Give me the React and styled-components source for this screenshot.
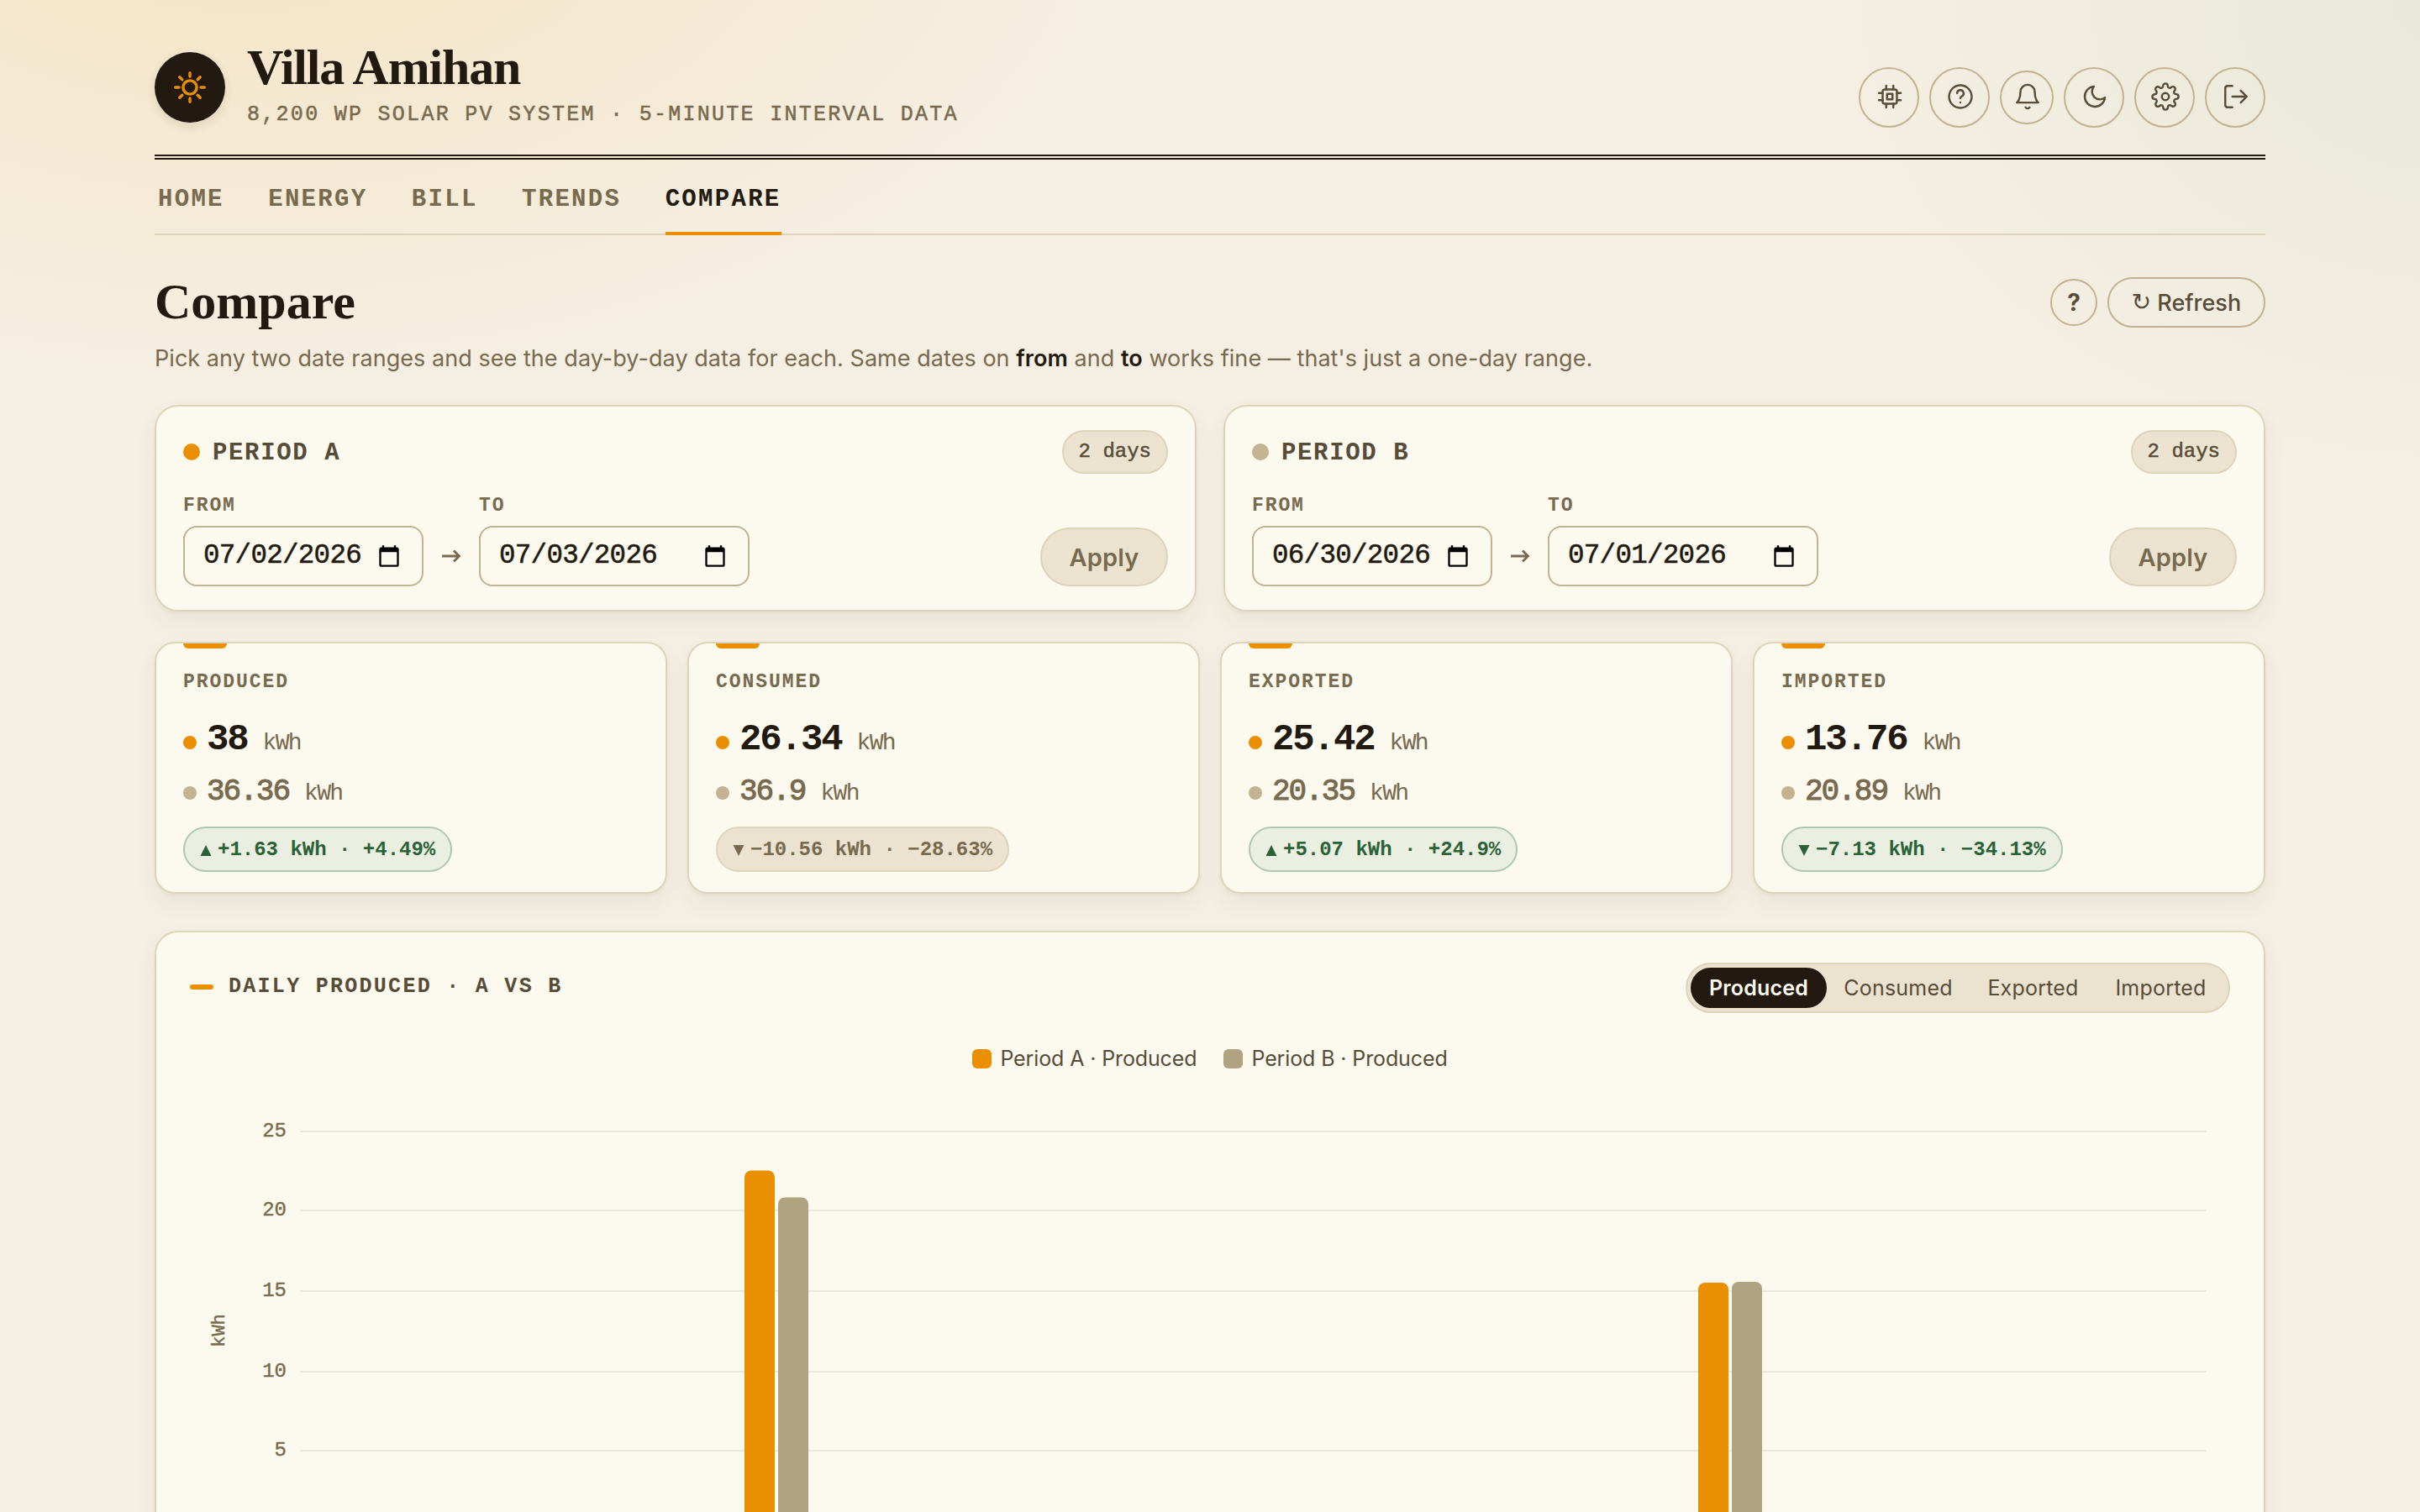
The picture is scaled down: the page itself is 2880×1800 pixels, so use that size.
import React from 'react';
import styled, { createGlobalStyle } from 'styled-components';

const c = {
  ink: '#221a10',
  body: '#574c38',
  mute: '#776a4e',
  line: '#ddd4ba',
  rule: '#c2b390',
  card: '#fcf9ef',
  chip: '#ebe3d0',
  amber: '#e98f00',
  sand: '#c2b392',
  barB: '#b1a282',
  green: '#2a6237',
};
const mono = `'Liberation Mono', 'DejaVu Sans Mono', monospace`;
const sans = `Inter, 'Liberation Sans', sans-serif`;
const serif = `'Liberation Serif', serif`;

const GlobalStyle = createGlobalStyle`
  *, *::before, *::after { box-sizing: border-box; }
  html, body { margin: 0; padding: 0; overflow: hidden; background: #f5efe3; }
`;

const Page = styled.div`
  height: 1800px;
  overflow: hidden;
  padding: 0 184px;
  font-family: ${sans};
  color: ${c.ink};
  background:
    radial-gradient(1600px 900px at 10% -8%, rgba(240, 178, 50, 0.19), rgba(240, 178, 50, 0) 68%),
    radial-gradient(1200px 900px at 102% 0%, rgba(80, 150, 90, 0.08), rgba(80, 150, 90, 0) 65%),
    #f5efe3;
`;

const Header = styled.header`
  display: flex;
  justify-content: space-between;
  height: 190px;
  padding: 48px 0 24px;
  border-bottom: 6px double ${c.ink};
`;
const Brand = styled.div`
  display: flex;
  align-items: center;
  gap: 26px;
`;
const Logo = styled.div`
  width: 84px;
  height: 84px;
  border-radius: 50%;
  background: ${c.ink};
  display: grid;
  place-items: center;
  box-shadow: 0 4px 12px rgba(60, 45, 15, 0.12);
`;
const BrandText = styled.div`
  display: flex;
  flex-direction: column;
  gap: 11px;
  padding-bottom: 5px;
`;
const BrandName = styled.h1`
  margin: 0;
  font: 700 60px/60px ${serif};
  letter-spacing: -1.2px;
`;
const Tagline = styled.div`
  font: 400 25px/32px ${mono};
  letter-spacing: 2.28px;
  color: ${c.mute};
  -webkit-text-stroke: 0.5px ${c.mute};
  text-transform: uppercase;
`;
const Actions = styled.div`
  display: flex;
  align-items: center;
  align-self: flex-end;
  gap: 12px;
  margin-bottom: 8px;
`;
const IconButton = styled.button`
  width: ${(p) => p.$size || 72}px;
  height: ${(p) => p.$size || 72}px;
  padding: 0;
  border: 2px solid ${c.rule};
  border-radius: 50%;
  background: transparent;
  color: ${c.body};
  display: grid;
  place-items: center;
  svg { transform: translate(1px, -1px); }
`;

const Nav = styled.nav`
  display: flex;
  gap: 52.4px;
  padding-left: 4px;
  border-bottom: 2px solid ${c.line};
`;
const NavLink = styled.a`
  padding: 30px 0 20px;
  margin-bottom: -2px;
  border-bottom: 4px solid ${(p) => (p.$active ? c.amber : 'transparent')};
  font: 700 29px/36px ${mono};
  letter-spacing: 2.3px;
  color: ${(p) => (p.$active ? c.ink : c.mute)};
`;

const TitleRow = styled.div`
  display: flex;
  justify-content: space-between;
  align-items: center;
  height: 60px;
  margin-top: 50px;
`;
const Title = styled.h2`
  margin: 0;
  padding-bottom: 3px;
  font: 700 60px/60px ${serif};
`;
const TitleActions = styled.div`
  display: flex;
  align-items: center;
  gap: 12px;
`;
const HelpButton = styled.button`
  width: 56px;
  height: 56px;
  padding: 0;
  border: 2px solid ${c.rule};
  border-radius: 50%;
  background: transparent;
  color: ${c.body};
  font: 700 28px/1 ${sans};
`;
const RefreshButton = styled.button`
  display: flex;
  align-items: center;
  justify-content: center;
  gap: 7px;
  width: 188px;
  height: 60px;
  padding: 0;
  border: 2px solid ${c.rule};
  border-radius: 30px;
  background: transparent;
  color: ${c.body};
  font: 500 27px/1 ${sans};
  span { font: 400 28px/1 'DejaVu Sans', sans-serif; }
`;
const Intro = styled.p`
  margin: 17px 0 35px;
  font: 400 27px/40px ${sans};
  letter-spacing: 0.05px;
  white-space: nowrap;
  color: ${c.mute};
  b { font-weight: 600; color: ${c.ink}; }
`;

const Periods = styled.section`
  display: grid;
  grid-template-columns: 1fr 1fr;
  gap: 32px;
`;
const Card = styled.div`
  background: ${c.card};
  border: 2px solid ${c.line};
  border-radius: 28px;
  box-shadow: 0 2px 4px rgba(60, 45, 15, 0.04), 0 12px 28px rgba(60, 50, 15, 0.055);
`;
const PeriodCard = styled(Card)`
  height: 246px;
  padding: 28px 32px;
`;
const PeriodHead = styled.div`
  display: flex;
  align-items: center;
  height: 52px;
`;
const Dot = styled.span`
  flex: none;
  width: ${(p) => p.$size}px;
  height: ${(p) => p.$size}px;
  border-radius: 50%;
  background: ${(p) => p.$color};
`;
const PeriodName = styled.span`
  margin-left: 15px;
  padding-top: 4px;
  font: 700 29px/36px ${mono};
  letter-spacing: 1.65px;
  color: ${c.body};
`;
const Days = styled.span`
  margin-left: auto;
  height: 52px;
  padding: 0 18px;
  border: 2px solid ${c.line};
  border-radius: 26px;
  background: ${c.chip};
  font: 400 24px/47px ${mono};
  color: ${c.body};
  -webkit-text-stroke: 0.5px ${c.body};
`;
const PeriodForm = styled.div`
  display: flex;
  align-items: flex-end;
  margin-top: 24px;
`;
const Field = styled.label`
  display: flex;
  flex-direction: column;
  gap: 10px;
  width: ${(p) => p.$width}px;
`;
const FieldLabel = styled.span`
  font: 700 23px/28px ${mono};
  letter-spacing: 1.9px;
  color: ${c.mute};
`;
const DateBox = styled.span`
  display: flex;
  align-items: center;
  justify-content: space-between;
  height: 72px;
  padding: 0 25px 0 22px;
  border: 2px solid ${c.rule};
  border-radius: 16px;
  font: 400 32.5px/70px ${mono};
  letter-spacing: -0.7px;
  color: ${c.ink};
  -webkit-text-stroke: 0.5px ${c.ink};
`;
const Arrow = styled.span`
  width: 66px;
  height: 72px;
  display: grid;
  place-items: center;
  color: ${c.mute};
`;
const Apply = styled.button`
  margin-left: auto;
  width: 152px;
  height: 70px;
  padding: 0;
  border: 2px solid ${c.line};
  border-radius: 35px;
  background: ${c.chip};
  color: ${c.mute};
  font: 600 29px/1 ${sans};
  letter-spacing: 0.2px;
`;

const Stats = styled.section`
  display: grid;
  grid-template-columns: repeat(4, 1fr);
  gap: 24px;
  margin-top: 36px;
`;
const StatCard = styled(Card)`
  display: flex;
  flex-direction: column;
  align-items: flex-start;
  height: 300px;
  padding: 0 32px;
  border-radius: 24px;
  &::before {
    content: '';
    width: 52px;
    height: 6px;
    border-radius: 0 0 6px 6px;
    background: ${c.amber};
  }
`;
const StatName = styled.span`
  margin-top: 26px;
  font: 700 23px/28px ${mono};
  letter-spacing: 1.95px;
  color: ${c.mute};
`;
const Reading = styled.div`
  display: flex;
  align-items: baseline;
  gap: 12px;
  height: 60px;
  margin-top: ${(p) => (p.$main ? 24 : 3)}px;
  line-height: 60px;
`;
const Value = styled.span`
  font: ${(p) => (p.$main ? '700 44px' : '400 36px')}/60px ${mono};
  letter-spacing: ${(p) => (p.$main ? -2.1 : -2)}px;
  color: ${(p) => (p.$main ? c.ink : c.mute)};
  -webkit-text-stroke: ${(p) => (p.$main ? 0 : 1)}px ${c.mute};
`;
const Unit = styled.span`
  margin-left: 6px;
  font: 400 28px/60px ${mono};
  letter-spacing: -1.7px;
  color: ${c.mute};
`;
const Delta = styled.div`
  display: flex;
  align-items: center;
  height: 54px;
  margin-top: 11px;
  padding: 0 18px;
  border: 2px solid ${(p) => (p.$good ? '#adc7b0' : c.line)};
  border-radius: 27px;
  background: ${(p) => (p.$good ? '#ebefe1' : c.chip)};
  color: ${(p) => (p.$good ? c.green : c.mute)};
  font: 700 24px/47px ${mono};
  white-space: pre;
  svg { margin: 2px 7px 0 0; }
`;

const ChartCard = styled(Card)`
  height: 800px;
  margin-top: 44px;
  padding: 36px 40px;
`;
const ChartHead = styled.div`
  display: flex;
  justify-content: space-between;
  height: 60px;
`;
const ChartTitle = styled.div`
  display: flex;
  align-items: center;
  gap: 18px;
  height: 58px;
  font: 700 25px/58px ${mono};
  letter-spacing: 2.28px;
  color: ${c.body};
  &::before {
    content: '';
    width: 28px;
    height: 6px;
    border-radius: 3px;
    background: ${c.amber};
  }
`;
const Tabs = styled.div`
  display: flex;
  padding: 4px;
  border: 2px solid ${c.line};
  border-radius: 30px;
  background: ${c.chip};
`;
const Tab = styled.button`
  width: ${(p) => p.$width}px;
  height: 48px;
  padding: 1px 0 0;
  border: 0;
  border-radius: 24px;
  background: ${(p) => (p.$active ? c.ink : 'transparent')};
  color: ${(p) => (p.$active ? '#fcf9ef' : c.body)};
  font: ${(p) => (p.$active ? 600 : 400)} 25px/47px ${sans};
  letter-spacing: 0.2px;
`;
const Legend = styled.div`
  display: flex;
  justify-content: center;
  align-items: center;
  gap: 32px;
  height: 40px;
  margin-top: 34px;
`;
const LegendItem = styled.span`
  display: flex;
  align-items: center;
  gap: 10px;
  font: 400 25px/38px ${sans};
  letter-spacing: -0.12px;
  color: ${c.body};
  &::before {
    content: '';
    width: 23px;
    height: 23px;
    border-radius: 6px;
    background: ${(p) => p.$color};
  }
`;
const Plot = styled.svg`
  display: block;
  text {
    font: 400 24px ${mono};
    fill: ${c.mute};
    stroke: ${c.mute};
    stroke-width: 0.4px;
  }
`;

const Icon = ({ children }) => (
  <svg width="34" height="34" viewBox="0 0 24 24" fill="none" stroke="currentColor" strokeWidth="1.7" strokeLinecap="round" strokeLinejoin="round">
    {children}
  </svg>
);

const SunIcon = () => (
  <svg width="40" height="40" viewBox="-20 -20 40 40" fill="none" stroke={c.amber} strokeWidth="3.4" strokeLinecap="round">
    <circle r="8.1" />
    {[0, 45, 90, 135, 180, 225, 270, 315].map((a) => (
      <path key={a} d="M0 -13V-17.3" transform={`rotate(${a})`} />
    ))}
  </svg>
);

const CalendarIcon = () => (
  <svg width="28" height="28" viewBox="0 0 24 24" fill="#000">
    <path d="M20 3h-1V1h-2v2H7V1H5v2H4c-1.1 0-2 .9-2 2v16c0 1.1.9 2 2 2h16c1.1 0 2-.9 2-2V5c0-1.1-.9-2-2-2zm0 18H4V8h16v13z" />
  </svg>
);

const actions = [
  {
    name: 'Devices',
    icon: (
      <>
        <rect x="6" y="6" width="12" height="12" rx="1.8" />
        <rect x="9.7" y="9.7" width="4.6" height="4.6" />
        <path d="M9 2.8V6M15 2.8V6M9 18v3.2M15 18v3.2M2.8 9H6M2.8 15H6M18 9h3.2M18 15h3.2" />
      </>
    ),
  },
  {
    name: 'Help',
    icon: (
      <>
        <circle cx="12" cy="12" r="9.5" />
        <path d="M9.3 9.2a2.7 2.7 0 1 1 4 2.4c-.8.5-1.3.9-1.3 1.6M12 16.9h.01" />
      </>
    ),
  },
  {
    name: 'Alerts',
    size: 64,
    icon: <path d="M18 8A6 6 0 0 0 6 8c0 7-3 9-3 9h18s-3-2-3-9M13.73 21a2 2 0 0 1-3.46 0" />,
  },
  {
    name: 'Dark mode',
    icon: <path d="M20.5 12.8A8.5 8.5 0 1 1 11.2 3.5 6.6 6.6 0 0 0 20.5 12.8z" />,
  },
  {
    name: 'Settings',
    icon: (
      <>
        <circle cx="12" cy="12" r="3" />
        <path d="M19.4 15a1.65 1.65 0 0 0 .33 1.82l.06.06a2 2 0 0 1 0 2.83 2 2 0 0 1-2.83 0l-.06-.06a1.65 1.65 0 0 0-1.82-.33 1.65 1.65 0 0 0-1 1.51V21a2 2 0 0 1-2 2 2 2 0 0 1-2-2v-.09A1.65 1.65 0 0 0 9 19.4a1.65 1.65 0 0 0-1.82.33l-.06.06a2 2 0 0 1-2.83 0 2 2 0 0 1 0-2.83l.06-.06a1.65 1.65 0 0 0 .33-1.82 1.65 1.65 0 0 0-1.51-1H3a2 2 0 0 1-2-2 2 2 0 0 1 2-2h.09A1.65 1.65 0 0 0 4.6 9a1.65 1.65 0 0 0-.33-1.82l-.06-.06a2 2 0 0 1 0-2.83 2 2 0 0 1 2.83 0l.06.06a1.65 1.65 0 0 0 1.82.33H9a1.65 1.65 0 0 0 1-1.51V3a2 2 0 0 1 2-2 2 2 0 0 1 2 2v.09a1.65 1.65 0 0 0 1 1.51 1.65 1.65 0 0 0 1.82-.33l.06-.06a2 2 0 0 1 2.83 0 2 2 0 0 1 0 2.83l-.06.06a1.65 1.65 0 0 0-.33 1.82V9a1.65 1.65 0 0 0 1.51 1H21a2 2 0 0 1 2 2 2 2 0 0 1-2 2h-.09a1.65 1.65 0 0 0-1.51 1z" />
      </>
    ),
  },
  {
    name: 'Sign out',
    icon: <path d="M9 21H5a2 2 0 0 1-2-2V5a2 2 0 0 1 2-2h4M16 17l5-5-5-5M21 12H9" />,
  },
];

const periods = [
  { name: 'PERIOD A', color: c.amber, from: '07/02/2026', to: '07/03/2026' },
  { name: 'PERIOD B', color: c.sand, from: '06/30/2026', to: '07/01/2026' },
];

const stats = [
  { name: 'PRODUCED', a: '38', b: '36.36', up: true, good: true, delta: '+1.63 kWh · +4.49%' },
  { name: 'CONSUMED', a: '26.34', b: '36.9', up: false, good: false, delta: '−10.56 kWh · −28.63%' },
  { name: 'EXPORTED', a: '25.42', b: '20.35', up: true, good: true, delta: '+5.07 kWh · +24.9%' },
  { name: 'IMPORTED', a: '13.76', b: '20.89', up: false, good: true, delta: '−7.13 kWh · −34.13%' },
];

const tabs = [['Produced', 162], ['Consumed', 170], ['Exported', 151], ['Imported', 153]];

const grid = [[25, 67], [20, 161], [15, 257], [10, 353], [5, 447]];
const bars = [
  { x: 660, top: 113.5, color: c.amber },
  { x: 700, top: 145.5, color: c.barB },
  { x: 1795, top: 247, color: c.amber },
  { x: 1835, top: 246, color: c.barB },
];

const DateField = ({ label, value, width }) => (
  <Field $width={width}>
    <FieldLabel>{label}</FieldLabel>
    <DateBox>
      {value}
      <CalendarIcon />
    </DateBox>
  </Field>
);

export default function App() {
  return (
    <>
      <GlobalStyle />
      <Page>
        <Header>
          <Brand>
            <Logo><SunIcon /></Logo>
            <BrandText>
              <BrandName>Villa Amihan</BrandName>
              <Tagline>8,200 Wp solar PV system · 5-minute interval data</Tagline>
            </BrandText>
          </Brand>
          <Actions>
            {actions.map((a) => (
              <IconButton key={a.name} $size={a.size} aria-label={a.name}>
                <Icon>{a.icon}</Icon>
              </IconButton>
            ))}
          </Actions>
        </Header>
        <Nav>
          {['HOME', 'ENERGY', 'BILL', 'TRENDS', 'COMPARE'].map((n) => (
            <NavLink key={n} $active={n === 'COMPARE'}>{n}</NavLink>
          ))}
        </Nav>
        <TitleRow>
          <Title>Compare</Title>
          <TitleActions>
            <HelpButton>?</HelpButton>
            <RefreshButton><span>↻</span>Refresh</RefreshButton>
          </TitleActions>
        </TitleRow>
        <Intro>
          Pick any two date ranges and see the day-by-day data for each. Same dates on <b>from</b> and <b>to</b> works fine — that's just a one-day range.
        </Intro>
        <Periods>
          {periods.map((p) => (
            <PeriodCard key={p.name}>
              <PeriodHead>
                <Dot $size={20} $color={p.color} />
                <PeriodName>{p.name}</PeriodName>
                <Days>2 days</Days>
              </PeriodHead>
              <PeriodForm>
                <DateField label="FROM" value={p.from} width={286} />
                <Arrow>
                  <svg width="24" height="16" viewBox="0 0 24 16" fill="none" stroke="currentColor" strokeWidth="2.8">
                    <path d="M1 8h20M15 1.5L21.5 8 15 14.5" />
                  </svg>
                </Arrow>
                <DateField label="TO" value={p.to} width={322} />
                <Apply>Apply</Apply>
              </PeriodForm>
            </PeriodCard>
          ))}
        </Periods>
        <Stats>
          {stats.map((s) => (
            <StatCard key={s.name}>
              <StatName>{s.name}</StatName>
              <Reading $main>
                <Dot $size={16} $color={c.amber} />
                <Value $main>{s.a}</Value>
                <Unit>kWh</Unit>
              </Reading>
              <Reading>
                <Dot $size={16} $color={c.sand} />
                <Value>{s.b}</Value>
                <Unit>kWh</Unit>
              </Reading>
              <Delta $good={s.good}>
                <svg width="14" height="13" viewBox="0 0 14 13" fill="currentColor">
                  <path d={s.up ? 'M7 0L13.5 13H0.5Z' : 'M0.5 0H13.5L7 13Z'} />
                </svg>
                {s.delta}
              </Delta>
            </StatCard>
          ))}
        </Stats>
        <ChartCard>
          <ChartHead>
            <ChartTitle>DAILY PRODUCED · A VS B</ChartTitle>
            <Tabs>
              {tabs.map(([t, w]) => (
                <Tab key={t} $width={w} $active={t === 'Produced'}>{t}</Tab>
              ))}
            </Tabs>
          </ChartHead>
          <Legend>
            <LegendItem $color={c.amber}>Period A · Produced</LegendItem>
            <LegendItem $color={c.barB}>Period B · Produced</LegendItem>
          </Legend>
          <Plot width="2428" height="560" viewBox="0 0 2428 560">
            {grid.map(([v, y]) => (
              <g key={v}>
                <path d={`M131 ${y}H2400`} stroke="#ebe7dc" strokeWidth="2" />
                <text x="115" y={y + 5.5} textAnchor="end">{v}</text>
              </g>
            ))}
            <text transform="translate(41 304) rotate(-90)" textAnchor="middle" style={{ fontSize: 22 }}>kWh</text>
            {bars.map((b) => (
              <rect key={b.x} x={b.x} y={b.top} width="36" height="600" rx="8" fill={b.color} />
            ))}
          </Plot>
        </ChartCard>
      </Page>
    </>
  );
}
